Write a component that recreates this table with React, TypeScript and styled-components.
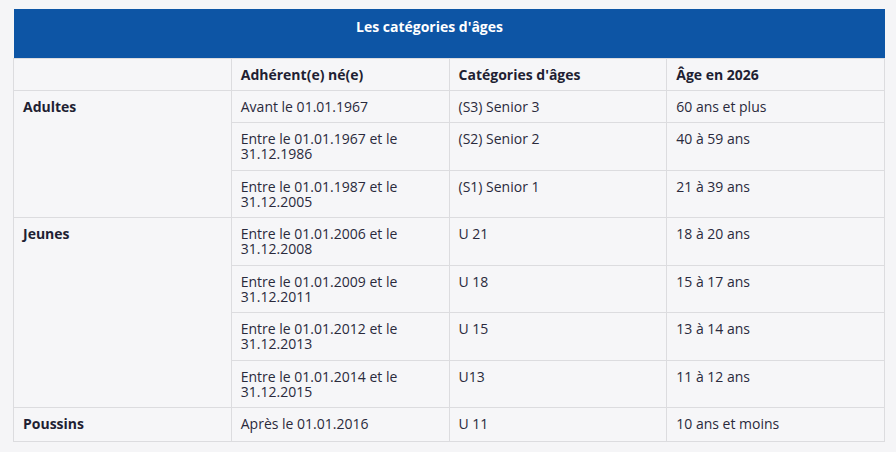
import React from "react";
import styled, { createGlobalStyle } from "styled-components";

const Global = createGlobalStyle`
  html, body { margin: 0; padding: 0; background: #f5f5f7; }
  body { font-family: "Open Sans", "Liberation Sans", sans-serif; }
`;

const Page = styled.div`
  padding: 9px 10px 0 13px;
`;

const Table = styled.table`
  width: 872px;
  table-layout: fixed;
  border-collapse: collapse;
  background: #f6f6f8;
  font-family: "Open Sans", "Liberation Sans", sans-serif;
  font-size: 14px;
  line-height: 15.25px;
  color: #2a2a3c;
`;

const TitleCell = styled.th`
  background: #0d55a5;
  color: #ffffff;
  font-weight: 700;
  font-size: 14px;
  line-height: 16px;
  text-align: center;
  vertical-align: top;
  height: 49px;
  box-sizing: border-box;
  padding: 10px 39px 0 0;
  border: none;
`;

const HeadCell = styled.th`
  border: 1px solid #dcdcdf;
  text-align: left;
  vertical-align: top;
  font-weight: 700;
  font-size: 14px;
  line-height: 15.25px;
  color: #1f1f33;
  padding: 8px 8px 8px 9px;
`;

const Cell = styled.td<{ $bold?: boolean; $tall?: boolean }>`
  border: 1px solid #dcdcdf;
  vertical-align: top;
  font-size: 14px;
  line-height: 15.25px;
  padding: ${(p) => (p.$tall ? "8px 8px 10px 9px" : "8px 8px 8px 9px")};
  font-weight: ${(p) => (p.$bold ? 700 : 400)};
  color: ${(p) => (p.$bold ? "#1f1f33" : "#2a2a3c")};
`;

type Row = { group?: string; span?: number; born: string; cat: string; age: string };

const rows: Row[] = [
  { group: "Adultes", span: 3, born: "Avant le 01.01.1967", cat: "(S3) Senior 3", age: "60 ans et plus" },
  { born: "Entre le 01.01.1967 et le 31.12.1986", cat: "(S2) Senior 2", age: "40 à 59 ans" },
  { born: "Entre le 01.01.1987 et le 31.12.2005", cat: "(S1) Senior 1", age: "21 à 39 ans" },
  { group: "Jeunes", span: 4, born: "Entre le 01.01.2006 et le 31.12.2008", cat: "U 21", age: "18 à 20 ans" },
  { born: "Entre le 01.01.2009 et le 31.12.2011", cat: "U 18", age: "15 à 17 ans" },
  { born: "Entre le 01.01.2012 et le 31.12.2013", cat: "U 15", age: "13 à 14 ans" },
  { born: "Entre le 01.01.2014 et le 31.12.2015", cat: "U13", age: "11 à 12 ans" },
  { group: "Poussins", span: 1, born: "Après le 01.01.2016", cat: "U 11", age: "10 ans et moins" },
];

export default function App() {
  return (
    <Page>
      <Global />
      <Table>
        <thead>
          <tr>
            <TitleCell colSpan={4}>Les catégories d'âges</TitleCell>
          </tr>
          <tr>
            <HeadCell></HeadCell>
            <HeadCell>Adhérent(e) né(e)</HeadCell>
            <HeadCell>Catégories d'âges</HeadCell>
            <HeadCell>Âge en 2026</HeadCell>
          </tr>
        </thead>
        <tbody>
          {rows.map((r, i) => {
            const last = i === rows.length - 1;
            return (
              <tr key={i}>
                {r.group && (
                  <Cell $bold $tall={last} rowSpan={r.span}>
                    {r.group}
                  </Cell>
                )}
                <Cell $tall={last}>{r.born}</Cell>
                <Cell $tall={last}>{r.cat}</Cell>
                <Cell $tall={last}>{r.age}</Cell>
              </tr>
            );
          })}
        </tbody>
      </Table>
    </Page>
  );
}
